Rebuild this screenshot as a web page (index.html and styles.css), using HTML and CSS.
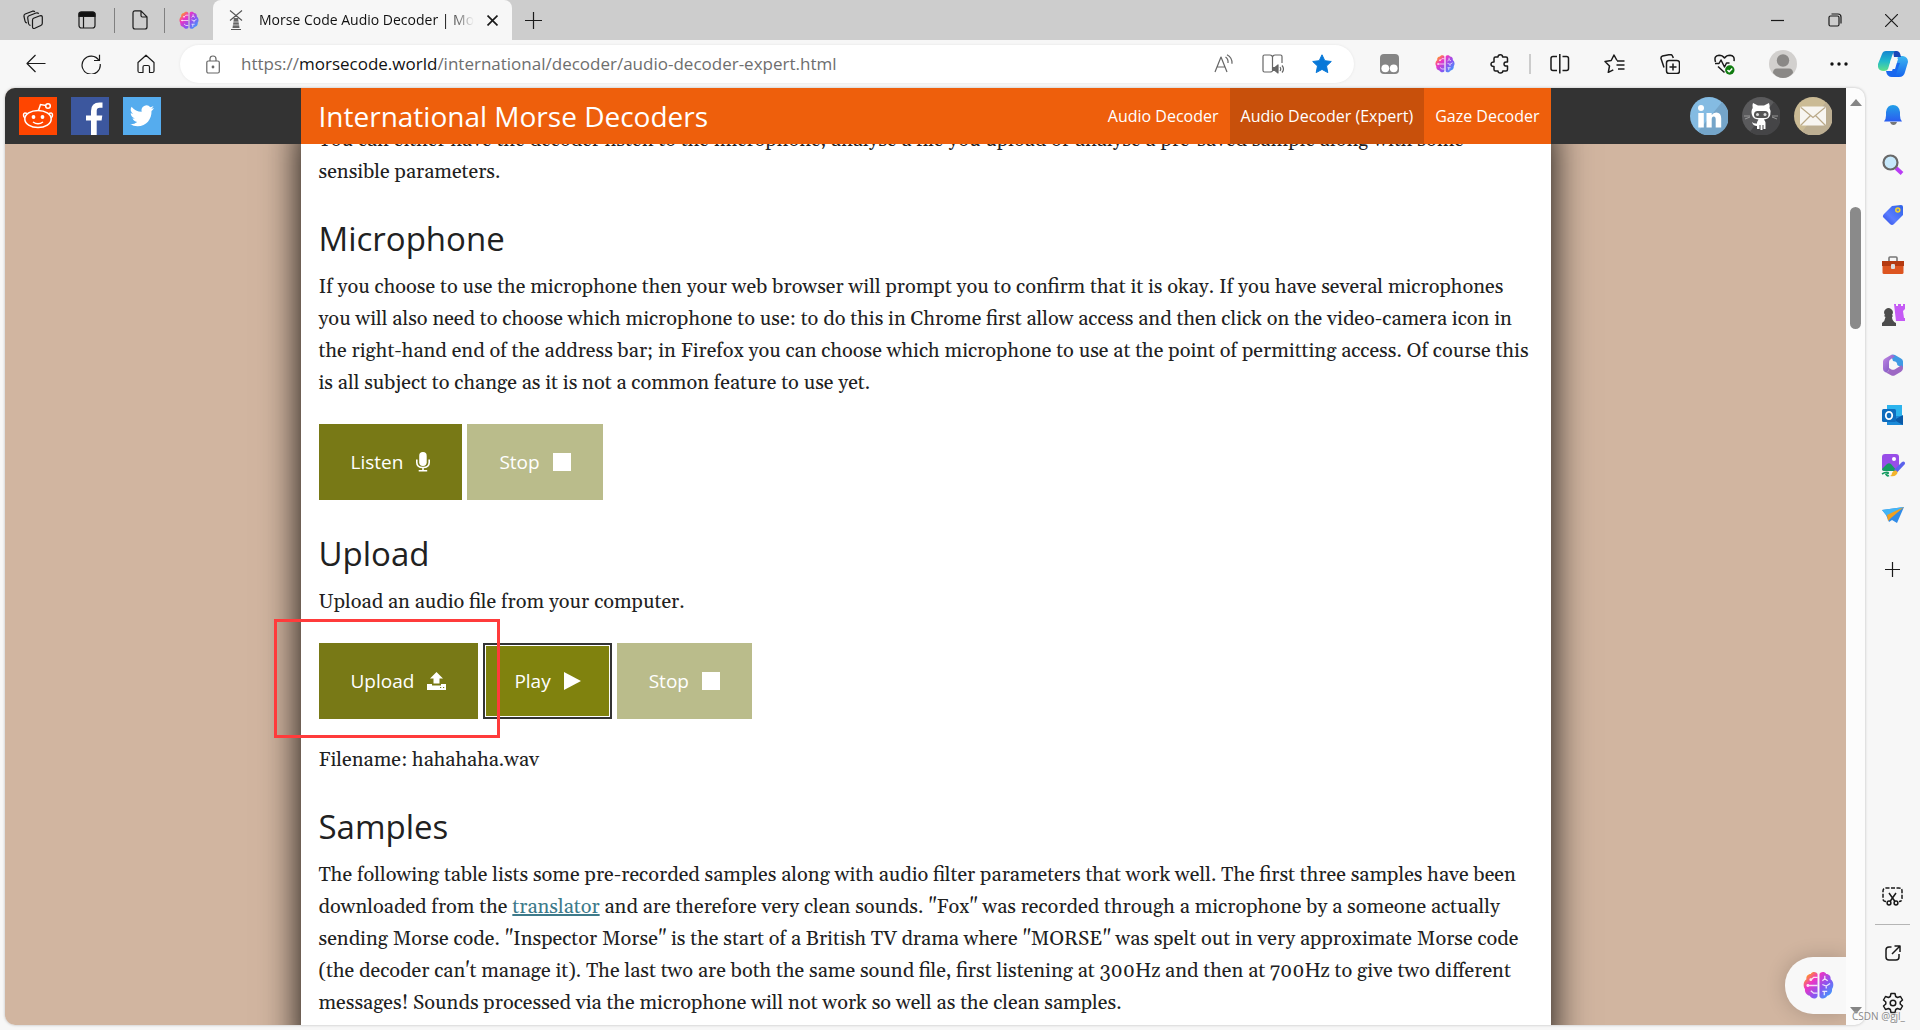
FILE: index.html
```html
<!DOCTYPE html>
<html lang="en">
<head>
<meta charset="utf-8">
<title>Morse Code Audio Decoder | Morse Code World</title>
<link rel="stylesheet" href="styles.css">
</head>
<body>
<svg class="defs" aria-hidden="true">
  <defs>
    <linearGradient id="g-brain" x1="0" y1="0" x2="30" y2="30" gradientUnits="userSpaceOnUse"><stop offset="0" stop-color="#ffa020"/><stop offset=".15" stop-color="#ff9030"/><stop offset=".34" stop-color="#ee34c4"/><stop offset=".62" stop-color="#8a55f0"/><stop offset="1" stop-color="#25b4ff"/></linearGradient>
    <linearGradient id="g-blue" x1="0" y1="0" x2="0" y2="1"><stop offset="0" stop-color="#22a0e8"/><stop offset="1" stop-color="#2a5cf0"/></linearGradient>
    <linearGradient id="g-tag" x1="1" y1="0" x2="0" y2="1"><stop offset="0" stop-color="#2d62e8"/><stop offset=".6" stop-color="#5a7cff"/><stop offset="1" stop-color="#2a46dd"/></linearGradient>
    <linearGradient id="g-cop1" x1="0" y1="0" x2="0" y2="1"><stop offset="0" stop-color="#1485d0"/><stop offset=".5" stop-color="#20b8cc"/><stop offset="1" stop-color="#5fe08a"/></linearGradient>
    <linearGradient id="g-cop2" x1="0" y1="0" x2="0" y2="1"><stop offset="0" stop-color="#3cb6f0"/><stop offset="1" stop-color="#1664ee"/></linearGradient>
    <linearGradient id="g-purple" x1="0" y1="0" x2="1" y2="1"><stop offset="0" stop-color="#c78be8"/><stop offset="1" stop-color="#6c4bb8"/></linearGradient>
  </defs>
  <symbol id="brain" viewBox="0 0 32 30">
    <path fill="url(#g-brain)" d="M15 3C14 .5 9.500 0 8 3 5 3 3 5.500 3.500 8.500 0 11 0 16 2 18.500 1.500 22 4 25 7 25.500 9 29.500 14 29 15 26zM17 3c1-2.500 5.500-3 7 0 3 0 5 2.500 4.500 5.500C32 11 32 16 30 18.500c.5 3.500-2 6.500-5 7-2 4-7 3.500-8 .5z"/>
    <g fill="none" stroke="#fff" stroke-width="1.300" opacity=".85"><path d="M15 6.500h-4L8.500 9M4 15h11M15 23h-4L8 20.500M20 10l2.500-2V5M22.500 8l3 2M20 14l4 1.500 4-2.500M24 15.500V18M20 21h5M22 21v4"/><circle cx="8" cy="9" r=".8" fill="#fff"/><circle cx="5" cy="15" r=".8" fill="#fff"/></g>
  </symbol>
</svg>
<div class="browser">
  <header class="tabstrip">
    <button class="cell" aria-label="Workspaces"><svg width="20" height="20" viewBox="0 0 20 20" class="line"><path d="M10.500 8.200l6.500-2.400q2.300-.6 2.300 1.500v6q0 1.600-1.500 2.200l-6 2.800q-2.300.8-2.300-1.500v-6.500q0-1.500 1-2.100zM7.500 15.500l-1-.5q-.8-.5-1-1.500L4.700 8q-.1-1.700 1.300-2.300L13 3q2-.6 2.700.8M4 13q-1.500-.3-1.900-1.700L1 6.500Q.7 4.700 2.200 4L9.500 1.200q1.700-.5 2.300.7"/></svg></button>
    <button class="cell" aria-label="Tab actions"><svg width="18" height="18" viewBox="0 0 18 18" class="line"><rect x="1" y="1" width="16" height="16" rx="2.500"/><path d="M1 3q0-2 2-2h12q2 0 2 2v2.500H1z" fill="#111"/><path d="M5.500 6v11"/></svg></button>
    <i class="divider"></i>
    <button class="cell small" aria-label="Blank tab"><svg width="16" height="20" viewBox="0 0 16 20" class="line"><path d="M3 .8h6l6 6V17q0 2-2 2H3q-2 0-2-2V3Q1 .8 3 .8zM9 1v4.500q0 1.500 1.500 1.500H15"/></svg></button>
    <i class="divider"></i>
    <button class="cell pinned" aria-label="Pinned tab"><svg width="20" height="19"><use href="#brain"/></svg></button>
    <div class="tab">
      <svg width="16" height="20" viewBox="0 0 16 20"><path d="M6 8h4l1.500 10h-7z" fill="#666"/><path d="M3 19.500h10M2 .5l12 10M14 .5L2 10.500M5 8.500Q8 4 11 8.500" fill="none" stroke="#555" stroke-width="1.100"/><path d="M5 12h6M5 15h6" stroke="#eee" stroke-width=".7"/></svg>
      <span class="tab-title">Morse Code Audio Decoder | Morse Code World</span>
      <button class="tab-close" aria-label="Close tab"><svg width="11" height="11" viewBox="0 0 10 10" class="line heavy"><path d="M.5.5l9 9M9.500.5l-9 9"/></svg></button>
    </div>
    <button class="cell pinned" aria-label="New tab"><svg width="17" height="17" viewBox="0 0 17 17" class="line"><path d="M8.500 0v17M0 8.500h17"/></svg></button>
    <div class="window-controls">
      <button aria-label="Minimise"><svg width="13" height="13" viewBox="0 0 13 13" class="line"><path d="M0 6.500h13"/></svg></button>
      <button aria-label="Restore"><svg width="14" height="14" viewBox="0 0 14 14" class="line"><rect x="1" y="3" width="10" height="10" rx="1.500"/><path d="M3.500 1H10q3 0 3 3v6.500"/></svg></button>
      <button aria-label="Close"><svg width="13" height="13" viewBox="0 0 13 13" class="line"><path d="M0 0l13 13M13 0L0 13"/></svg></button>
    </div>
  </header>

  <nav class="toolbar" aria-label="Browser">
    <button class="tool" aria-label="Back"><svg width="20" height="20" viewBox="0 0 20 20" class="line"><path d="M19.500 9.500H1M9.500 1L1 9.500l8.500 8.500"/></svg></button>
    <button class="tool" aria-label="Reload"><svg width="20" height="20" viewBox="0 0 20 20" class="line"><path d="M18 6.500A9.100 9.100 0 1 0 19.200 10M18.500.8v5.700H13"/></svg></button>
    <button class="tool" aria-label="Home"><svg width="18" height="20" viewBox="0 0 18 20" class="line"><path d="M1 8.500L9 1.200l8 7.300v8.500q0 1.500-1.500 1.500h-3V13q0-1.500-1.500-1.500H7.500Q6 11.500 6 13v5.500H2.500Q1 18.500 1 17z"/></svg></button>
    <div class="address">
      <svg width="14" height="19" viewBox="0 0 14 19" class="line gray"><rect x=".8" y="6" width="12.500" height="12" rx="1.500"/><path d="M4 6V4q0-3 3-3t3 3v2"/><circle cx="7" cy="12" r=".8" fill="#666"/></svg>
      <div class="url" role="textbox" aria-label="Address" contenteditable="true" spellcheck="false">https://<b>morsecode.world</b>/international/decoder/audio-decoder-expert.html</div>
      <button aria-label="Read aloud"><svg width="20" height="20" viewBox="0 0 20 20" class="line gray"><path d="M1 18L7 3l6 15M3 13h8M11.500 3q3 2 2.500 6M13 .8q5.500 3 5 9"/></svg></button>
      <button aria-label="Immersive reader"><svg width="22" height="20" viewBox="0 0 22 20" class="line gray"><path d="M10.500 3v14M10.500 3Q10 1 8 1H2.500Q1 1 1 2.500v14Q1 18 2.500 18H8q2 0 2.500-1M10.500 3Q11 1 13 1h5.500Q20 1 20 2.500V9"/><path d="M11 13.500h2l3-2.500v8l-3-2.500h-2z" fill="#666"/><path d="M18 13q1.500 2 0 4M20 11.500q3 3.500 0 7"/></svg></button>
      <button aria-label="Favourite"><svg width="20" height="20" viewBox="0 0 20 20"><path fill="#0878d8" stroke="#0878d8" stroke-linejoin="round" d="M10 .8l2.800 5.900 6.500.8-4.800 4.500 1.300 6.600L10 15.400l-5.800 3.200 1.300-6.600L.7 7.500l6.500-.8z"/></svg></button>
    </div>
    <button class="tool" aria-label="Extension"><svg width="19" height="20" viewBox="0 0 19 20"><rect width="19" height="20" rx="4" fill="#858585"/><circle cx="5.300" cy="14.300" r="3.900" fill="#fff"/><circle cx="13.700" cy="14.300" r="3.900" fill="#fff"/></svg></button>
    <button class="tool" aria-label="Assistant"><svg width="20" height="20"><use href="#brain"/></svg></button>
    <button class="tool" aria-label="Extensions"><svg width="20" height="20" viewBox="0 0 20 20" class="line heavy"><path d="M5.500 3H8Q8 .8 10.300 .8T12.600 3H16q1.500 0 1.500 1.500V8q-3.500-.5-3.500 2t3.500 2v3.500q0 1.500-1.500 1.500h-3.200q0 2-2.400 2T8 17H5.500Q4 17 4 15.500V12.500Q1 12.500 1 10.200T4 8V4.500Q4 3 5.500 3z"/></svg></button>
    <i class="tool-divider"></i>
    <button class="tool" aria-label="Split screen"><svg width="20" height="20" viewBox="0 0 20 20" class="line heavy"><path d="M7 2.500H3Q1 2.500 1 4.500v10q0 2 2 2h4M12.500 2.500h4q2 0 2 2v10q0 2-2 2h-4M9.800 0v19.500"/></svg></button>
    <button class="tool" aria-label="Favourites"><svg width="21" height="20" viewBox="0 0 21 20" class="line heavy"><path d="M13 6.500L10 1 7.200 6.500 1 7.500l4.500 4.500-1.200 6.300 5-2.500M13 7h7.500M12.500 11h8M14 15h6.500"/></svg></button>
    <button class="tool" aria-label="Collections"><svg width="20" height="20" viewBox="0 0 20 20" class="line heavy"><rect x="6.500" y="6.500" width="13" height="13" rx="2.500"/><path d="M13 9.500v7M9.500 13h7M4 13.500L1 4.500Q.8 2.500 2.500 2l7.500-1.500q2 0 2.500 1.500l.8 2"/></svg></button>
    <button class="tool" aria-label="Browser essentials"><svg width="21" height="21" viewBox="0 0 21 21" class="line heavy"><path d="M1.500 8Q-.5 1.500 5 1.200q3.500 0 5.500 2.800 2-2.800 5.500-2.800 5 .3 4 6M1 9.500h4l2-3.500 3.500 7 2-4h3M4 12.500l6.500 6"/><circle cx="15.800" cy="16" r="4.700" fill="#107c10" stroke="none"/><path d="M13.500 16l1.700 1.700 3-3.200" stroke="#fff"/></svg></button>
    <button class="tool profile" aria-label="Profile"><svg width="28" height="28" viewBox="0 0 28 28"><circle cx="14" cy="14" r="14" fill="#d2d0ce"/><circle cx="14" cy="10.500" r="6.200" fill="#8a8886"/><path d="M4 23q0-4.500 4-4.500h12q4 0 4 4.500-4 5-10 5T4 23z" fill="#8a8886"/></svg></button>
    <button class="tool menu" aria-label="Settings and more"><svg width="18" height="4" viewBox="0 0 18 4"><g fill="#111"><circle cx="2" cy="2" r="1.700"/><circle cx="9" cy="2" r="1.700"/><circle cx="16" cy="2" r="1.700"/></g></svg></button>
    <button class="tool" aria-label="Copilot"><svg width="30" height="28" viewBox="0 0 30 28"><path fill="url(#g-cop2)" d="M20 6h5q5 1 5 6l-3 10q-1 5-6 5h-8q3-1 4-5z"/><path fill="#1848b8" d="M15 1h4q3 0 4 6h-7z"/><path fill="url(#g-cop1)" d="M8 1h9q-2 1-3 5l-4 13q-1 2-4 2-7-.5-6-7L4 4q1-3 4-3z"/><path fill="#1a68ee" d="M8 21h6l3-8h5l-4 11q-1 3-4 3-5 0-6-6z"/><path fill="#f7f7f7" d="M13 9h7l-3 10h-6z"/></svg></button>
  </nav>

  <div class="workspace">
    <div class="viewport">
      <div class="page">
        <header class="site-header">
          <div class="social">
            <a href="#reddit" aria-label="Reddit"><svg width="38" height="38" viewBox="0 0 38 38"><path fill="#ff4500" d="M0 0h38v38H0z"/><g fill="none" stroke="#fff" stroke-width="1.500"><ellipse cx="19" cy="22" rx="13.200" ry="8.500"/><path d="M19.500 13.500l2-6 5.500 1M8 16.500q-3.500-1.500-3.500 1.500 0 2 1.500 3M30 16.500q3.500-1.500 3.500 1.500 0 2-1.500 3M14 25q5 3.500 10 0"/><circle cx="29" cy="9" r="2.300"/></g><circle cx="14.500" cy="20" r="1.900" fill="#fff"/><circle cx="23.500" cy="20" r="1.900" fill="#fff"/></svg></a>
            <a href="#facebook" aria-label="Facebook"><svg width="38" height="38" viewBox="0 0 38 38"><path fill="#3c579e" d="M0 0h38v38H0z"/><path fill="#fff" d="M20 38V23.500h-5v-5h5V14q0-8.500 8.500-8.500h3v5.300h-2.800q-3 0-3 3v4.700h5.600l-.7 5h-4.900V38z"/></svg></a>
            <a href="#twitter" aria-label="Twitter"><svg width="38" height="38" viewBox="0 0 38 38"><path fill="#55acee" d="M0 0h38v38H0z"/><path fill="#fff" transform="translate(6.500 7.500)" d="M24.500 3.500q-1.300.7-2.800.8Q23.300 3.300 24 1.500q-1.500.9-3.200 1.200A5 5 0 0 0 12.200 7.300Q6 7 2 2.200q-2.200 4 1.500 7-1.200 0-2.300-.7 0 4 4 5.200-1.100.3-2.200.1 1.200 3.300 4.700 3.600Q4.500 20 .5 19.600 4 21.800 8 21.800C17 21.800 22.300 14.500 22 6.500q1.500-1.200 2.500-3z"/></svg></a>
          </div>
          <div class="banner">
            <a class="brand" href="#top">International Morse Decoders</a>
            <nav class="site-nav" aria-label="Decoders">
              <a href="#audio">Audio Decoder</a>
              <a href="#expert" class="current">Audio Decoder (Expert)</a>
              <a href="#gaze">Gaze Decoder</a>
            </nav>
          </div>
          <div class="contact">
            <a href="#linkedin" aria-label="LinkedIn"><svg width="38" height="38" viewBox="0 0 38 38"><circle cx="19" cy="19" r="19" fill="#84bbe2"/><path d="M32 5A19 19 0 0 1 8 34.500z" fill="#75a5c9"/><g fill="#fff"><circle cx="11" cy="11" r="3"/><path d="M8.300 16h5.500v14.500H8.300zM16.500 16h5.200v2q1.500-2.500 4.500-2.500 5 0 5 6v9h-5.500v-8q0-3-2-3t-2 3v8h-5.200z"/></g></svg></a>
            <a href="#github" aria-label="GitHub"><svg width="38" height="38" viewBox="0 0 38 38"><circle cx="19" cy="19" r="19" fill="#5a5a5c"/><path d="M32 5A19 19 0 0 1 8 34.500z" fill="#454547"/><path fill="#fff" d="M11 6l5 2.500h6L27 6q1 3 .5 5 2 3 .8 7-1.300 4-6.300 4.500 1.500 2 1.500 4V32h-2v-4h-1v5h-2v-5h-1v4h-2.500v-3q-4 0-5-4 2 2 5 1.500 0-2 1.500-4Q11 22 10 18q-1.300-4 .7-7Q10 8 11 6z"/><rect x="12" y="14" width="14.500" height="7" rx="3.500" fill="#555"/><g fill="#ddd"><circle cx="15.500" cy="17.500" r="1.500"/><circle cx="23" cy="17.500" r="1.500"/></g><path d="M2 19h6M30 19h6M3 22l5-2M30 20l5 2" stroke="#aaa" stroke-width=".8"/></svg></a>
            <a href="#email" aria-label="Email"><svg width="38" height="38" viewBox="0 0 38 38"><circle cx="19" cy="19" r="19" fill="#cbbb95"/><path d="M32 5A19 19 0 0 1 8 34.500z" fill="#bcae92"/><rect x="6" y="9.500" width="26" height="19" rx="2.500" fill="#f7f5f1"/><path d="M7 10.500l12 10 12-10M7 28l9.500-9.500M31 28l-9.500-9.500" fill="none" stroke="#b9a887" stroke-width="1.200"/></svg></a>
          </div>
        </header>

        <main class="content" id="top">
          <section>
            <p>You can either have the decoder listen to the microphone, analyse a file you upload or analyse a pre-saved sample along with some<br>sensible parameters.</p>
          </section>
          <section>
            <h2>Microphone</h2>
            <p>If you choose to use the microphone then your web browser will prompt you to confirm that it is okay. If you have several microphones<br>you will also need to choose which microphone to use: to do this in Chrome first allow access and then click on the video-camera icon in<br>the right-hand end of the address bar; in Firefox you can choose which microphone to use at the point of permitting access. Of course this<br>is all subject to change as it is not a common feature to use yet.</p>
            <div class="actions">
              <button class="btn">Listen <svg width="14" height="20" viewBox="3 0 14 20"><rect x="6.200" y="0" width="7.500" height="14" rx="3.700" fill="#fff"/><path d="M3.800 7.500v3q0 5 6.200 5t6.200-5v-3M10 15v3.500M5.700 18.700h8.500" fill="none" stroke="#fff" stroke-width="1.600"/></svg></button>
              <button class="btn" disabled>Stop <svg width="18" height="20" viewBox="0 0 18 20"><path d="M0 1h18v18H0z" fill="#fff"/></svg></button>
            </div>
          </section>
          <section>
            <h2>Upload</h2>
            <p>Upload an audio file from your computer.</p>
            <div class="actions">
              <button class="btn">Upload <svg width="19" height="20" viewBox="0 0 19 20"><path d="M9.500 1L16 7.500h-3.500v5h-6v-5H3zM0 13h5v1.500h9V13h5v6H0z" fill="#fff"/><path d="M13 16.500h1.200M16 16.500h1.200" stroke="#787916" stroke-width="1.200"/></svg></button>
              <button class="btn focused">Play <svg width="17" height="20" viewBox="0 0 17 20"><path d="M0 1l17 9-17 9z" fill="#fff"/></svg></button>
              <button class="btn" disabled>Stop <svg width="18" height="20" viewBox="0 0 18 20"><path d="M0 1h18v18H0z" fill="#fff"/></svg></button>
              <span class="highlight"></span>
            </div>
            <p>Filename: hahahaha.wav</p>
          </section>
          <section>
            <h2>Samples</h2>
            <p>The following table lists some pre-recorded samples along with audio filter parameters that work well. The first three samples have been<br>downloaded from the <a href="#translator">translator</a> and are therefore very clean sounds. "Fox" was recorded through a microphone by a someone actually<br>sending Morse code. "Inspector Morse" is the start of a British TV drama where "MORSE" was spelt out in very approximate Morse code<br>(the decoder can't manage it). The last two are both the same sound file, first listening at 300Hz and then at 700Hz to give two different<br>messages! Sounds processed via the microphone will not work so well as the clean samples.</p>
          </section>
        </main>
        <button class="assistant" aria-label="Open assistant"><svg width="31" height="29"><use href="#brain"/></svg></button>
      </div>
      <div class="scrollbar">
        <svg width="12" height="7" viewBox="0 0 12 7"><path d="M6 0l6 7H0z" fill="#858585"/></svg>
        <i class="thumb"></i>
        <svg class="down" width="12" height="7" viewBox="0 0 12 7"><path d="M0 0h12L6 7z" fill="#858585"/></svg>
      </div>
    </div>

    <aside class="sidebar" aria-label="Sidebar">
      <button aria-label="Notifications"><svg width="20" height="22" viewBox="0 0 20 22"><path d="M7 18h7q-1 3-3.500 3T7 18z" fill="#777"/><path d="M1 17.500q2-2 2-6V8q1-7 7-7t7 7v3.500q0 4 2 6z" fill="url(#g-blue)"/></svg></button>
      <button aria-label="Search"><svg width="22" height="22" viewBox="0 0 22 22"><path d="M14 14l6 5.500" stroke="#b93cf5" stroke-width="4"/><circle cx="8.500" cy="8.500" r="7" fill="#c6e8fb" stroke="#686868" stroke-width="2.200"/></svg></button>
      <button aria-label="Shopping"><svg width="22" height="22" viewBox="0 0 22 22"><path d="M10 2l9-1q2 0 2 2v8l-9 9q-2 2-4 0l-6.500-6.500Q0 12 2 10z" fill="url(#g-tag)"/><circle cx="15.800" cy="6" r="2" fill="#7288c0" stroke="#f4d32c" stroke-width="1.500"/></svg></button>
      <button aria-label="Tools"><svg width="24" height="20" viewBox="0 0 24 20"><path d="M8 6V3q0-1 1-1h6q1 0 1 1v3" fill="none" stroke="#777" stroke-width="1.600"/><rect x="1.500" y="6" width="21" height="13" rx="1.500" fill="#dd5520"/><path d="M1 6h22v5H1z" fill="#b53a10"/><rect x="10" y="9" width="4" height="5" rx="1" fill="#ddd"/></svg></button>
      <button aria-label="Games"><svg width="24" height="24" viewBox="0 0 24 24"><path d="M13 1h2v2h2V1h3v2h2V1h2v5l-2 2 1 7h1v3h-9z" fill="#c55af5"/><path d="M4 12a4.300 4.300 0 1 1 7 0l1 1-1 1q0 4 4 6v3H1v-3q3-2 3.500-6l-1.500-1z" fill="#4c4c4c"/></svg></button>
      <button aria-label="Microsoft 365"><svg width="22" height="22" viewBox="0 0 22 22"><path d="M9 1q2-1 4 0l6 3.500q2 1 2 3V14l-6-3-4-4z" fill="#3f9ae4"/><path d="M9 1L3 4.500q-2 1-2 3V15q0 2 2 3l1 .5q3-1 3-4V8q0-2 2-3l4-2.500Q11 0 9 1z" fill="url(#g-purple)"/><path d="M4 18.500l5 2.700q2 1 4 0l6-3.500q2-1 2-3.500 0-2-1.500-3l-6.500 4q-2 1-4 0L7 14q0 4-3 4.500z" fill="#9d68c4"/><circle cx="11.500" cy="11" r="3.800" fill="#f7f7f7"/></svg></button>
      <button aria-label="Outlook"><svg width="22" height="22" viewBox="0 0 22 22"><path d="M5 1h15v16H5z" fill="#2cb4ee"/><path d="M5 12h16v9H5z" fill="#1c8ad8"/><path d="M21 11v10l-9-5z" fill="#0b5aa8"/><rect y="5" width="14" height="13" rx="1.500" fill="#0f6cbd"/><ellipse cx="7" cy="11.500" rx="3.200" ry="3.600" fill="none" stroke="#fff" stroke-width="1.800"/></svg></button>
      <button aria-label="Image creator"><svg width="24" height="24" viewBox="0 0 24 24"><rect x="1" y="1" width="17" height="17" rx="3" fill="#984de8"/><circle cx="13" cy="6" r="2" fill="#fff"/><path d="M1 16l5-5q2-1.500 4 0l6 7H3q-2 0-2-2z" fill="#169b62"/><path d="M0 18h12v6H0z" fill="#f7f7f7"/><path d="M13 17l8-8q1.500-1 2.500 0t0 2.500l-7.500 8z" fill="#5b62eb"/><path d="M9 23q2-.5 2-3 1-3 4-2.500 3 2 0 4.500-2 2-6 1z" fill="#f2b52c"/><path d="M1 21q3-2 6-1.500 1 1-2 2 1 2 3 1" fill="none" stroke="#169b62" stroke-width="1.600"/></svg></button>
      <button aria-label="Drop"><svg width="22" height="18" viewBox="0 0 22 18"><path d="M0 4L22 1 15 17l-5-3-3 2-3-7z" fill="#318ce8"/><path d="M0 4L22 1 5 10z" fill="#44b5f5"/><path d="M22 1L5 9l1 6 3-3z" fill="#f1a020"/></svg></button>
      <button class="add" aria-label="Customise"><svg width="15" height="15" viewBox="0 0 15 15" class="line"><path d="M7.500 0v15M0 7.500h15"/></svg></button>
      <div class="sidebar-foot">
        <button aria-label="Screenshot"><svg width="21" height="19" viewBox="0 0 21 19" class="line heavy"><path stroke-dasharray="4 1.500" d="M4 14.500q-3 0-3-3V4q0-3 3-3h13q3 0 3 3v7.500q0 3-3 3"/><path d="M7 6l6 8.500M14 6l-6 8.500"/><circle cx="7" cy="16" r="1.900"/><circle cx="14" cy="16" r="1.900"/></svg></button>
        <i class="rule"></i>
        <button aria-label="Open in new window"><svg width="16" height="16" viewBox="0 0 16 16" class="line heavy"><path d="M6.500 2H4Q1 2 1 5v7q0 3 3 3h7q3 0 3-3V9M7 9l8-8M9.500 1H15v6"/></svg></button>
        <button aria-label="Settings"><svg width="22" height="22" viewBox="0 0 22 22" class="line heavy"><path d="M9 1.500h4l.7 3 1.800 1 3-1 2 3.500-2.300 2v2l2.300 2-2 3.500-3-1-1.800 1-.7 3H9l-.7-3-1.800-1-3 1-2-3.500 2.300-2v-2L1.500 8l2-3.500 3 1 1.800-1z"/><circle cx="11" cy="11" r="2.800"/></svg></button>
      </div>
    </aside>
  </div>
  <span class="watermark">CSDN @gjl_</span>
</div>
</body>
</html>
```
FILE: styles.css
```css
* { box-sizing: border-box; }
body { margin: 0; font-family: "Open Sans", "Noto Sans", sans-serif; color: #212121; }
button { padding: 0; border: 0; background: none; font: inherit; color: inherit; display: inline-flex; align-items: center; justify-content: center; }
svg { display: block; flex: none; }
.defs { position: absolute; width: 0; height: 0; }
.line { fill: none; stroke: #1a1a1a; stroke-width: 1.2; stroke-linejoin: round; }
.line.heavy { stroke-width: 1.5; }
.line.gray { stroke: #666; }

.browser { position: relative; display: flex; flex-direction: column; height: 100vh; overflow: hidden; background: #f7f7f7; }

/* tab strip */
.tabstrip { display: flex; align-items: center; height: 40px; padding-left: 6px; background: #cdcdcd; }
.cell { width: 54px; height: 40px; }
.cell.small { width: 49px; }
.cell.pinned { width: 48px; }
.divider { width: 1px; height: 25px; background: #808080; }
.tab { display: flex; align-items: center; width: 299px; height: 40px; margin-right: -3px; padding: 0 10px 0 15px; background: #f7f7f7; border-radius: 8px 8px 0 0; }
.tab-title { flex: 1; margin-left: 15px; font-size: 14px; line-height: 20px; white-space: nowrap; overflow: hidden; color: #111; mask-image: linear-gradient(to right, #000 88%, transparent); }
.tab-close { width: 20px; height: 20px; margin-left: 8px; }
.window-controls { display: flex; margin-left: auto; }
.window-controls button { width: 57px; height: 40px; }

/* toolbar */
.toolbar { display: flex; align-items: center; height: 48px; padding-left: 8px; }
.address { flex: 1; display: flex; align-items: center; height: 38px; margin: 0 8px 0 7px; padding: 0 8px 0 26px; background: #fff; border-radius: 19px; box-shadow: 0 0 3px rgba(0,0,0,.08); }
.address button { width: 49px; height: 32px; }
.url { flex: 1; margin-left: 21px; font-size: 17px; line-height: 24px; white-space: nowrap; color: #6e6e6e; outline: 0; }
.url b { font-weight: 400; color: #111; }
.tool { width: 55px; height: 40px; }
.tool.profile { width: 61px; }
.tool.menu { width: 52px; }
.tool-divider { width: 2px; height: 20px; margin: 0 1px 0 2px; background: #ccc; }

/* viewport */
.workspace { flex: 1; display: flex; min-height: 0; }
.viewport { flex: 1; display: flex; margin: 0 0 5px 5px; border-radius: 10px; overflow: hidden; background: #fcfcfc; box-shadow: 0 0 3px rgba(0,0,0,.25); }
.page { position: relative; flex: 1; overflow: hidden; background: #d1b5a0; }
.site-header { position: relative; z-index: 1; display: grid; grid-template-columns: 1fr minmax(0, 1250px) 1fr; height: 56px; background: #333; color: #fff; }
.site-header a { color: #fff; text-decoration: none; }
.social, .contact { display: flex; align-items: center; gap: 14px; padding: 0 14px; }
.contact { justify-content: flex-end; }
.banner { display: flex; justify-content: space-between; background: #ee5f0c; }
.brand { padding-left: 18px; font-size: 28px; line-height: 56px; }
.site-nav { display: flex; font-size: 16px; line-height: 56px; }
.site-nav a { padding: 0 11px; }
.site-nav .current { background: #c8500b; }

.content { max-width: 1250px; margin: -20px auto 0; padding: 0 18px 40px; background: #fff; box-shadow: 0 0 36px rgba(0,0,0,.95); }
.content section + section { padding-top: 30px; }
.content h2 { margin: 0 0 11px; font-size: 33px; font-weight: 400; line-height: 42px; }
.content p { margin: 0; font-family: Georgia, Gelasio, "Liberation Serif", serif; font-size: 20px; line-height: 32px; white-space: nowrap; }
.content p a { color: #3d7a8a; }
.actions { position: relative; display: flex; gap: 5px; margin-top: 25px; }
.actions:last-child { margin-bottom: 3px; }
.actions + p { margin-top: 25px; }
.btn { gap: 13px; height: 76px; padding: 0 32px; background: #787916; color: #fff; font-size: 19px; }
.btn:disabled { background: #babc8b; }
.btn.focused { padding: 0 29px; background: #80820e; border: 2px solid #333; box-shadow: inset 0 0 0 1px #fff; }
.highlight { position: absolute; left: -45px; top: -24px; width: 226px; height: 119px; border: 3px solid #ff3b3b; pointer-events: none; }
.assistant { position: absolute; right: 0; bottom: 11px; width: 61px; height: 57px; padding-left: 6px; border-radius: 28px 0 0 28px; background: #f8f8f8; box-shadow: 0 0 20px rgba(0,0,0,.18); }

.scrollbar { display: flex; flex-direction: column; align-items: center; width: 19px; padding: 11px 0; }
.thumb { width: 11px; height: 122px; margin-top: 101px; border-radius: 6px; background: #8a8a8a; }
.down { margin-top: auto; }

/* edge sidebar */
.sidebar { display: flex; flex-direction: column; align-items: center; width: 55px; padding: 2px 0; }
.sidebar button { width: 50px; height: 50px; }
.sidebar .add { margin-top: 4px; }
.sidebar-foot { display: flex; flex-direction: column; margin-top: auto; align-items: center; }
.rule { width: 35px; height: 1px; margin: 3px 0; background: #b5b5b5; }
.watermark { position: absolute; right: 15px; bottom: 7px; font-size: 10px; line-height: 14px; color: #888; text-shadow: 0 0 2px #fff; }
```
